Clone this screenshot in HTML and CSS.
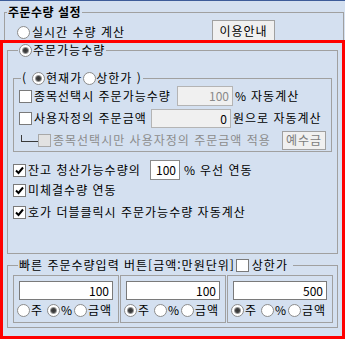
FILE: index.html
```html
<!DOCTYPE html>
<html lang="ko">

<head>
  <meta charset="UTF-8" />
  <meta name="viewport" content="width=device-width, initial-scale=1.0" />
  <title>주문수량 설정</title>
  <link rel="stylesheet" href="styles.css">
</head>

<body>
  <div class="topline"></div>

  <fieldset class="group outer">
    <legend>주문수량 설정</legend>
    <div class="outer-row">
      <label class="opt-line"><span class="radio"></span>실시간 수량 계산</label>
      <button class="btn guide">이용안내</button>
    </div>
  </fieldset>

  <fieldset class="group avail">
    <legend><span class="leg"><span class="radio on"></span><span class="gap1">주문가능수량</span></span></legend>

    <fieldset class="group price">
      <legend><span class="leg">(<span class="radio on lp"></span>현재가<span class="radio"></span>상한가&nbsp;)</span></legend>
      <div class="row">
        <span class="check"></span>
        <span class="lbl w1">종목선택시 주문가능수량</span>
        <span class="field dis w-num">100</span>
        <span class="unit">%</span><span class="after">자동계산</span>
      </div>
      <div class="row">
        <span class="check"></span>
        <span class="lbl w2">사용자정의 주문금액</span>
        <span class="field dis w-amt">0</span>
        <span class="after2">원으로 자동계산</span>
      </div>
      <div class="row">
        <span class="tree"></span>
        <span class="check dis"></span>
        <span class="lbl muted">종목선택시만 사용자정의 주문금액 적용</span>
        <button class="btn deposit">예수금</button>
      </div>
    </fieldset>

    <div class="row2 first">
      <span class="check"><svg width="11" height="11" viewBox="0 0 11 11"><path d="M2 5.5 L4.5 8 L9 2.5" stroke="#000" stroke-width="2" fill="none"/></svg></span>
      <span class="lbl w3">잔고 청산가능수량의</span>
      <span class="field w-pct">100</span>
      <span class="unit u2">%</span><span class="after">우선 연동</span>
    </div>
    <div class="row2">
      <span class="check"><svg width="11" height="11" viewBox="0 0 11 11"><path d="M2 5.5 L4.5 8 L9 2.5" stroke="#000" stroke-width="2" fill="none"/></svg></span>
      <span class="lbl">미체결수량 연동</span>
    </div>
    <div class="row2 last">
      <span class="check"><svg width="11" height="11" viewBox="0 0 11 11"><path d="M2 5.5 L4.5 8 L9 2.5" stroke="#000" stroke-width="2" fill="none"/></svg></span>
      <span class="lbl">호가 더블클릭시 주문가능수량 자동계산</span>
    </div>
  </fieldset>

  <fieldset class="group quick">
    <legend><span class="leg">빠른 주문수량입력 버튼[금액:만원단위]<span class="check leg-check"></span>상한가&nbsp;</span></legend>
    <div class="boxes">
      <div class="box">
        <div class="field big">100</div>
        <div class="opts">
          <span class="opt o1"><span class="radio"></span>주</span>
          <span class="opt o2"><span class="radio on"></span>%</span>
          <span class="opt"><span class="radio"></span>금액</span>
        </div>
      </div>
      <div class="box">
        <div class="field big">100</div>
        <div class="opts">
          <span class="opt o1"><span class="radio on"></span>주</span>
          <span class="opt o2"><span class="radio"></span>%</span>
          <span class="opt"><span class="radio"></span>금액</span>
        </div>
      </div>
      <div class="box">
        <div class="field big">500</div>
        <div class="opts">
          <span class="opt o1"><span class="radio on"></span>주</span>
          <span class="opt o2"><span class="radio"></span>%</span>
          <span class="opt"><span class="radio"></span>금액</span>
        </div>
      </div>
    </div>
  </fieldset>

  <div class="highlight"></div>
</body>

</html>
```

FILE: styles.css
```css
* {
  margin: 0;
  padding: 0;
  box-sizing: border-box;
}

body {
  width: 345px;
  height: 339px;
  position: relative;
  overflow: hidden;
  background: #d4e0f0;
  font-family: "Noto Sans CJK KR", "Noto Sans", sans-serif;
  font-size: 12px;
  line-height: 14px;
  letter-spacing: 1px;
  color: #000;
}

.topline {
  height: 1px;
  background: #3d5c99;
}

/* group boxes */
fieldset.group {
  border: 1px solid #a0a0a0;
  min-width: 0;
}

legend {
  padding: 0 1px;
  height: 14px;
  line-height: 14px;
  white-space: nowrap;
}

.leg {
  display: inline-flex;
  align-items: center;
  height: 14px;
}

.gap1 {
  margin-left: 1px;
}

.outer {
  margin: 4px 1px 0 4px;
}

.outer legend {
  margin-left: 2px;
  font-weight: bold;
  letter-spacing: 0.5px;
}

.outer-row {
  display: grid;
  grid-template-columns: 195px 63px;
  padding-left: 12px;
  margin-top: 1px;
  height: 22px;
}

.opt-line {
  display: flex;
  align-items: center;
  margin-top: 5px;
  height: 14px;
}

.opt-line .radio {
  margin-right: 2px;
}

.avail {
  margin: 0 7px 0 7px;
  padding-bottom: 31px;
}

.avail > legend {
  margin-left: 10px;
}

.price {
  margin: 14px 5px 0 5px;
}

.price > legend {
  margin-left: 7px;
}

.lp {
  margin-left: 5px;
  margin-right: 1px;
}

.price .radio + * {
  margin-left: 1px;
}

.quick {
  margin: 4px 7px 0 7px;
  padding-bottom: 4px;
}

.quick > legend {
  margin-left: 10px;
}

.leg-check {
  margin: 0 3px 0 1px;
}

/* controls */
.radio {
  display: inline-block;
  flex: none;
  width: 13px;
  height: 13px;
  border: 1px solid #8c8c8c;
  border-radius: 50%;
  background: #fff;
}

.radio.on {
  background: radial-gradient(circle, #333 0, #444 2px, #9a9a9a 3px, #fff 4px);
}

.check {
  display: inline-flex;
  align-items: center;
  justify-content: center;
  flex: none;
  width: 13px;
  height: 13px;
  border: 1px solid #7a7a7a;
  background: #fff;
}

.check.dis {
  background: #e2e2e2;
  border-color: #a8a8a8;
}

.field {
  display: inline-block;
  flex: none;
  height: 20px;
  line-height: 18px;
  padding-right: 3px;
  text-align: right;
  letter-spacing: 0;
  background: #fff;
  border: 1px solid #8a8a8a;
}

.field.dis {
  background: #f0f0f0;
  border-color: #b4b4b4;
}

.w-num {
  width: 56px;
  color: #8a8a8a;
}

.w-amt {
  width: 80px;
  height: 19px;
}

.w-pct {
  width: 30px;
}

.btn {
  font: inherit;
  letter-spacing: 1px;
  color: #000;
  background: #f0f0f0;
  border: 1px solid #a0a0a0;
  text-align: center;
}

.guide {
  width: 63px;
  height: 22px;
}

.deposit {
  width: 44px;
  height: 19px;
  margin-left: auto;
  color: #7c7c7c;
}

/* rows */
.row {
  display: flex;
  align-items: center;
  height: 22px;
  padding: 0 5px;
  white-space: nowrap;
}

.row2 {
  display: flex;
  align-items: center;
  height: 20px;
  padding-left: 5px;
  white-space: nowrap;
}

.row2.first {
  margin-top: 8px;
}

.row2.last {
  margin-top: 2px;
}

.check + .lbl {
  margin-left: 2px;
}

.lbl {
  flex: none;
}

.w1 {
  width: 143px;
}

.w2 {
  width: 117px;
}

.w3 {
  width: 122px;
}

.unit {
  margin-left: 2px;
}

.u2 {
  margin-left: 4px;
}

.after {
  margin-left: 4px;
}

.after2 {
  margin-left: 2px;
}

.muted {
  color: #8c8c8c;
}

.tree {
  align-self: flex-start;
  flex: none;
  width: 17px;
  height: 7px;
  margin: 6px 0 0 2px;
  border-left: 1px solid #3a3a3a;
  border-bottom: 1px solid #3a3a3a;
}

/* quick buttons */
.boxes {
  display: grid;
  grid-template-columns: repeat(3, 106px);
  column-gap: 1px;
  margin-top: 3px;
  padding-left: 5px;
}

.box {
  height: 48px;
  padding: 5px 3px 0;
  border: 1px solid #a0a0a0;
}

.field.big {
  display: block;
  height: 19px;
  line-height: 17px;
  margin: 0 2px;
  border-color: #7a7a7a;
}

.opts {
  display: flex;
  align-items: center;
  height: 16px;
  margin-top: 2px;
}

.opt {
  display: flex;
  align-items: center;
  gap: 1px;
}

.o1 {
  width: 30px;
}

.o2 {
  width: 27px;
}

/* red selection mark over the panel */
.highlight {
  position: absolute;
  left: 0;
  top: 40px;
  width: 345px;
  height: 299px;
  border: 3px solid #f00;
}
```
